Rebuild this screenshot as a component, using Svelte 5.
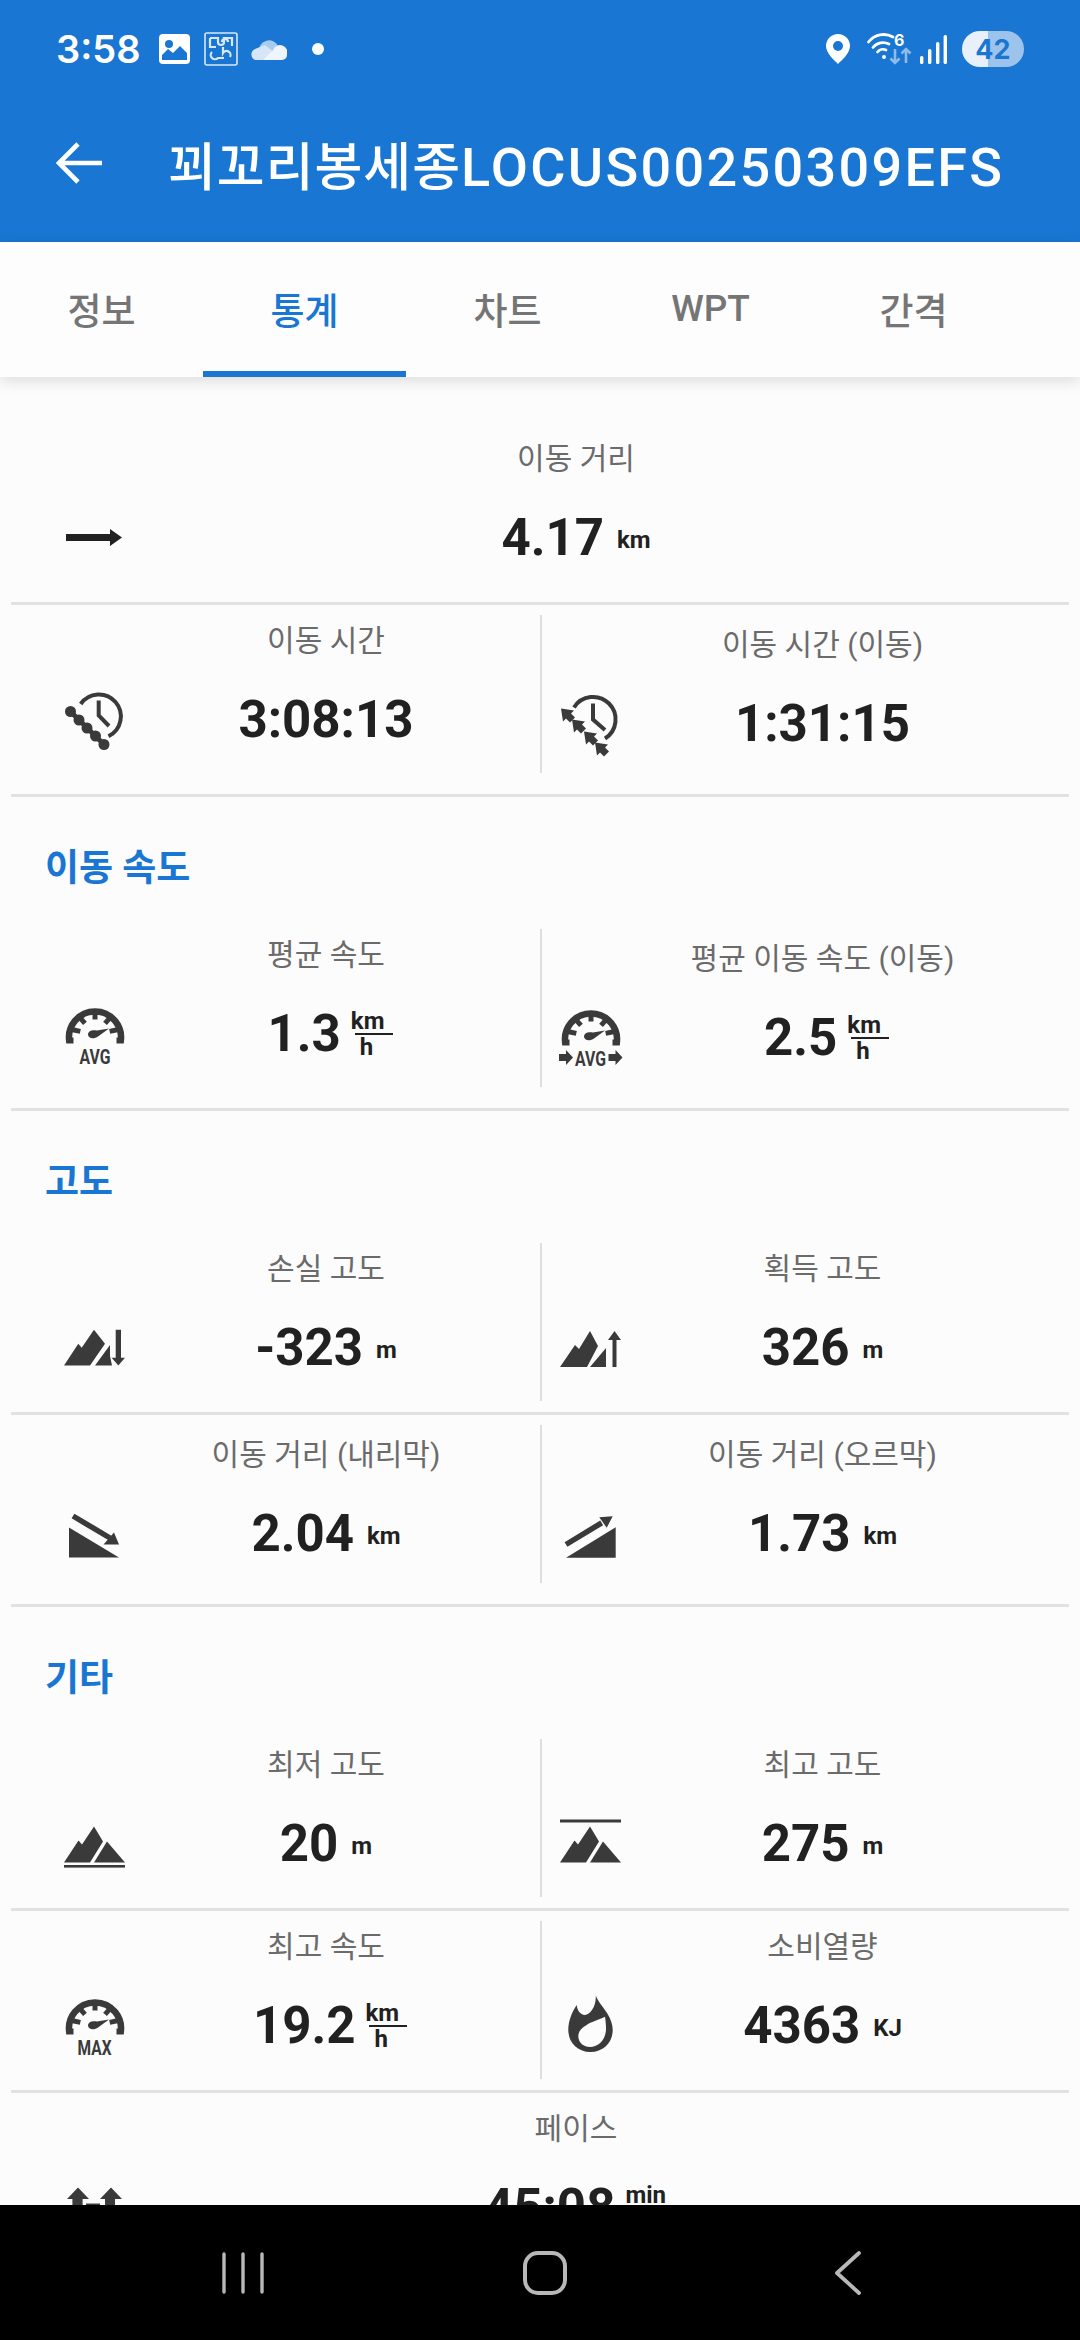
<script>
  const tabs = ["정보", "통계", "차트", "WPT", "간격"];
  const sections = [
    {
      title: "",
      rows: [
        [{ label: "이동 거리", value: "4.17", unit: "km", icon: "arrow", full: true }],
        [
          { label: "이동 시간", value: "3:08:13", icon: "clockChain" },
          { label: "이동 시간 (이동)", value: "1:31:15", icon: "clockArrows", low: true }
        ]
      ]
    },
    {
      title: "이동 속도",
      rows: [
        [
          { label: "평균 속도", value: "1.3", top: "km", bottom: "h", icon: "avg" },
          { label: "평균 이동 속도 (이동)", value: "2.5", top: "km", bottom: "h", icon: "avgMoving", low: true }
        ]
      ]
    },
    {
      title: "고도",
      rows: [
        [
          { label: "손실 고도", value: "-323", unit: "m", icon: "descent" },
          { label: "획득 고도", value: "326", unit: "m", icon: "ascent" }
        ],
        [
          { label: "이동 거리 (내리막)", value: "2.04", unit: "km", icon: "downhill", low: true },
          { label: "이동 거리 (오르막)", value: "1.73", unit: "km", icon: "uphill", low: true }
        ]
      ]
    },
    {
      title: "기타",
      rows: [
        [
          { label: "최저 고도", value: "20", unit: "m", icon: "lowest" },
          { label: "최고 고도", value: "275", unit: "m", icon: "highest" }
        ],
        [
          { label: "최고 속도", value: "19.2", top: "km", bottom: "h", icon: "max" },
          { label: "소비열량", value: "4363", unit: "KJ", icon: "flame" }
        ],
        [{ label: "페이스", value: "45:08", top: "min", bottom: "km", icon: "pace", full: true }]
      ]
    }
  ];
  const gaugeTicks = [-78, -42, 0, 42, 78];
</script>

{#snippet gauge(cy)}
  <path d="M5.5 {cy + 8} A26 26 0 1 1 56.5 {cy + 8}" fill="none" stroke="currentColor" stroke-width="6.5" />
  {#each gaugeTicks as angle}
    <rect x="28.5" y={cy - 24} width="5" height="9" fill="currentColor" transform="rotate({angle} 31 {cy})" />
  {/each}
  <rect x="2.5" y={cy + 3} width="7" height="6" fill="currentColor" />
  <rect x="52.5" y={cy + 3} width="7" height="6" fill="currentColor" />
  <path d="M24 {cy} C24 {cy - 4} 29 {cy - 5} 33 {cy - 4} L45 {cy - 6} L34 {cy + 2} C30 {cy + 5} 24 {cy + 4} 24 {cy} Z" fill="currentColor" />
{/snippet}

{#snippet peaks(top)}
  <path d="M0 {top + 36} L14.5 {top + 14} L18 {top + 18} L30 {top} L39 {top + 15} L26 {top + 36} Z" fill="currentColor" />
  <path d="M30 {top + 36} L43 {top + 15} L61 {top + 36} Z" fill="currentColor" />
{/snippet}

{#snippet icon(name)}
  <svg class="icon" class:dark={name === "arrow"} viewBox="0 0 61 61" aria-hidden="true">
    {#if name === "arrow"}
      <path d="M2 27h44v-5l12 8.5-12 8.5v-5H2z" fill="currentColor" />
    {:else if name === "clockChain"}
      <g fill="none" stroke="currentColor">
        <path d="M16.7 15A22 22 0 1 1 44.5 47.2" stroke-width="4" />
        <path d="M34.7 11.5V26.5L45 37" stroke-width="4" />
        <path d="M6.5 22.5 40 55.5" stroke-width="5" />
      </g>
      {#each [[6.5, 22.5], [15, 31], [23, 39], [31.5, 47], [40, 55.5]] as [cx, cy]}
        <circle {cx} {cy} r="5.5" fill="currentColor" />
      {/each}
    {:else if name === "clockArrows"}
      <g fill="none" stroke="currentColor" stroke-width="4">
        <path d="M14 14.5A22.5 22.5 0 1 1 45 45.5" />
        <path d="M33 10.5V26.5L45 37" />
      </g>
      {#each [[8, 22.5], [19, 33.5], [31, 45.5], [42, 56.5]] as [x, y]}
        <path d="M-7-7 6-5 3-2 7 2 2 7-2 3-5 6Z" fill="currentColor" transform="translate({x} {y})" />
      {/each}
    {:else if name === "avg"}
      {@render gauge(31.5)}
      <text class="tag" x="31" y="60.5" text-anchor="middle" textLength="31" lengthAdjust="spacingAndGlyphs">AVG</text>
    {:else if name === "avgMoving"}
      {@render gauge(29.5)}
      <text class="tag" x="30.5" y="58.5" text-anchor="middle" textLength="31" lengthAdjust="spacingAndGlyphs">AVG</text>
      <path d="M-1 47h7v-4l7 7.5-7 7.5v-4h-7z" fill="currentColor" />
      <path d="M48.5 47h7v-4l7 7.5-7 7.5v-4h-7z" fill="currentColor" />
    {:else if name === "max"}
      {@render gauge(30.5)}
      <text class="tag" x="30.5" y="59.5" text-anchor="middle" textLength="34" lengthAdjust="spacingAndGlyphs">MAX</text>
    {:else if name === "descent"}
      <path d="M0 48.5 14.3 26.8 17.7 30.8 30 12.8 41 26.8 26 48.5Z" fill="currentColor" />
      <path d="M31 48.5 46 28V39L48 48.5Z" fill="currentColor" />
      <path d="M51.7 12.8H57V40.8H61L54.3 48.5 47.7 40.8H51.7Z" fill="currentColor" />
    {:else if name === "ascent"}
      <path d="M0 50 15 28 19 32 30 14 38 29 27 50Z" fill="currentColor" />
      <path d="M30 50 46 31V50Z" fill="currentColor" />
      <path d="M52.5 50V23H48L54.5 14 61 23H56.5V50Z" fill="currentColor" />
    {:else if name === "downhill"}
      <path d="M5 24.5V54.5H55Z" fill="currentColor" />
      <path d="M9 13 46 35" stroke="currentColor" stroke-width="5.5" />
      <path d="M55 41.5 50 29.5 39.5 41.5Z" fill="currentColor" />
    {:else if name === "uphill"}
      <path d="M6 54.8 55.7 24.2V54.8Z" fill="currentColor" />
      <path d="M6 41.5 41.7 19.8" stroke="currentColor" stroke-width="5.5" />
      <path d="M52.7 13.2 39.3 14.2 46.7 24.8Z" fill="currentColor" />
    {:else if name === "lowest"}
      {@render peaks(13.5)}
      <rect x="0" y="52" width="61" height="2.6" fill="currentColor" />
    {:else if name === "highest"}
      {@render peaks(13.5)}
      <rect x="0" y="6.5" width="61" height="3" fill="currentColor" />
    {:else if name === "flame"}
      <path
        fill-rule="evenodd"
        fill="currentColor"
        transform="translate(0 -2)"
        d="M35.7 0C35 5 42 12 47 20C51 26 52.7 32 52.7 37C52.7 50 43 59 30.5 59C18 59 8.3 50 8.3 37C8.3 28 12 19 16.7 12C17 17 20 21.5 25 22C30 21.5 37 14 35.7 0ZM45 23.8C38 27 31 29 26.7 32C21 35 18.3 39 18.3 43C18.3 50 24 54 30 54C39 54 46 46 46 36C46 31 45.5 27 45 23.8Z"
      />
    {:else if name === "pace"}
      <path d="M3 22 14 10.5 25 22H18.6V40H8.4V22Z" fill="currentColor" />
      <path d="M36 22 47 10.5 58 22H51V40H41V22Z" fill="currentColor" />
      <rect x="22" y="26.5" width="14" height="5" fill="currentColor" />
    {/if}
  </svg>
{/snippet}

<div class="phone">
  <header class="top">
    <div class="status">
      <div class="status-left">
        <span class="clock">3:58</span>
        <svg class="st-photo" viewBox="0 0 31 30" aria-hidden="true">
          <rect width="31" height="30" rx="4" fill="#fff" />
          <circle cx="10" cy="10" r="4" fill="#1976d2" />
          <path d="M3 26V21L9 15 14 19 21 12 28 19V26Z" fill="#1976d2" />
        </svg>
        <svg class="st-puzzle" viewBox="0 0 34 34" aria-hidden="true">
          <rect x="1" y="1" width="32" height="32" rx="2" fill="none" stroke="#d8e8f8" stroke-width="1.6" />
          <g fill="none" stroke="#d8e8f8" stroke-width="2.2">
            <path d="M6 6H14V10A3 3 0 1 0 20 10V6H28V14" />
            <path d="M6 6V15H12M24 10A3 3 0 1 0 18 10" />
            <path d="M8 20A4 4 0 1 0 14 26H20M19 15V21A4 4 0 1 1 26 25" />
          </g>
        </svg>
        <svg class="st-cloud" viewBox="0 0 36 24" aria-hidden="true">
          <path d="M8 14A10 10 0 0 1 27 9L20 15Z" fill="#a9cbee" />
          <path d="M4 23A6 6 0 0 1 4 12L14 8 24 16 17 23Z" fill="#d6e6f7" />
          <path d="M12 23 22 13A7 7 0 0 1 36 18 5 5 0 0 1 31 23Z" fill="#eef5fc" />
        </svg>
        <span class="st-dot"></span>
      </div>
      <div class="status-right">
        <svg class="st-pin" viewBox="0 0 24 30" aria-hidden="true">
          <path fill-rule="evenodd" fill="#fff" d="M12 0A12 12 0 0 1 24 12C24 19 16 26 12 30 8 26 0 19 0 12A12 12 0 0 1 12 0ZM12 7A5 5 0 1 0 12 17 5 5 0 0 0 12 7Z" />
        </svg>
        <svg class="st-wifi" viewBox="0 0 44 32" aria-hidden="true">
          <g fill="none" stroke="#fff" stroke-width="2.8" stroke-linecap="round">
            <path d="M1.5 9A19 19 0 0 1 26 4" />
            <path d="M6 14.5A13 13 0 0 1 22 11" />
            <path d="M10.5 19A7 7 0 0 1 19 17" />
          </g>
          <circle cx="17" cy="24" r="2" fill="#fff" />
          <g fill="none" stroke="#8fbbe9" stroke-width="2.6">
            <path d="M28 16V30M23.5 25.5 28 30 32.5 25.5" />
            <path d="M39 30V16M34.5 20.5 39 16 43.5 20.5" />
          </g>
          <text x="27" y="13" class="st-six">6</text>
        </svg>
        <svg class="st-signal" viewBox="0 0 27 29" aria-hidden="true">
          <g fill="#fff">
            <rect x="0" y="21" width="3.4" height="8" rx="1.6" />
            <rect x="8" y="14" width="3.4" height="15" rx="1.6" />
            <rect x="16" y="7" width="3.4" height="22" rx="1.6" />
            <rect x="23.6" y="0" width="3.4" height="29" rx="1.6" />
          </g>
        </svg>
        <span class="battery"><span class="battery-text">42</span></span>
      </div>
    </div>
    <div class="toolbar">
      <svg class="back" viewBox="0 0 46 42" aria-hidden="true">
        <path d="M46 21H3M22 2 3 21 22 40" fill="none" stroke="#fff" stroke-width="4.6" />
      </svg>
      <h1>꾀꼬리봉세종<span class="latin">LOCUS00250309EFS</span></h1>
    </div>
  </header>

  <nav class="tabs">
    {#each tabs as tab, i}
      <span class="tab" class:active={i === 1}>{tab}</span>
    {/each}
  </nav>

  <main class="stats">
    {#each sections as section}
      {#if section.title}
        <h2>{section.title}</h2>
      {/if}
      {#each section.rows as row, r}
        <div class="row">
          {#each row as cell, c}
            {#if c === 1}<span class="vline"></span>{/if}
            <div class="cell" class:full={cell.full} class:second={c === 1} class:low={cell.low}>
              <div class="label">{cell.label}</div>
              <div class="glyph">{@render icon(cell.icon)}</div>
              <div class="reading">
                <span class="value">{cell.value}</span>
                {#if cell.unit}
                  <span class="unit">{cell.unit}</span>
                {:else if cell.top}
                  <span class="frac">
                    <span>{cell.top}</span>
                    <i></i>
                    <span class="under">{cell.bottom}</span>
                  </span>
                {/if}
              </div>
            </div>
          {/each}
        </div>
        <div class="rule" class:last={r === section.rows.length - 1}></div>
      {/each}
    {/each}
  </main>

  <footer class="navbar">
    <svg viewBox="0 0 44 44" aria-hidden="true">
      <path d="M3 3V41M22 3V41M41 3V41" fill="none" stroke="#b8b8b8" stroke-width="3.4" stroke-linecap="round" />
    </svg>
    <svg viewBox="0 0 44 44" aria-hidden="true">
      <rect x="2" y="2" width="40" height="40" rx="13" fill="none" stroke="#b8b8b8" stroke-width="4" />
    </svg>
    <svg class="nav-back" viewBox="0 0 30 44" aria-hidden="true">
      <path d="M26 2 4 22 26 42" fill="none" stroke="#b8b8b8" stroke-width="3.8" stroke-linecap="round" stroke-linejoin="round" />
    </svg>
  </footer>
</div>

<style>
  :global(body) {
    margin: 0;
    background: #fcfcfc;
  }
  .phone {
    width: 1080px;
    height: 2340px;
    display: flex;
    flex-direction: column;
    overflow: hidden;
    font-family: Roboto, "Noto Sans CJK KR", sans-serif;
    background: #fcfcfc;
  }

  .top {
    background: #1976d2;
    color: #fff;
    height: 242px;
    flex: none;
  }
  .status {
    height: 98px;
    display: flex;
    justify-content: space-between;
    align-items: center;
    padding: 0 56px;
  }
  .status-left,
  .status-right {
    display: flex;
    align-items: center;
  }
  .clock {
    font-family: Inter, sans-serif;
    font-weight: 600;
    font-size: 38px;
    width: 103px;
  }
  .st-photo {
    width: 31px;
    height: 30px;
  }
  .st-puzzle {
    width: 34px;
    height: 34px;
    margin-left: 14px;
  }
  .st-cloud {
    width: 36px;
    height: 24px;
    margin-left: 13px;
  }
  .st-dot {
    width: 12px;
    height: 12px;
    border-radius: 50%;
    background: #fff;
    margin-left: 25px;
  }
  .st-pin {
    width: 24px;
    height: 30px;
  }
  .st-wifi {
    width: 44px;
    height: 32px;
    margin-left: 17px;
    overflow: visible;
  }
  .st-six {
    font: 700 16px Inter, sans-serif;
    fill: #fff;
  }
  .st-signal {
    width: 27px;
    height: 29px;
    margin-left: 9px;
  }
  .battery {
    width: 62px;
    height: 36px;
    border-radius: 18px;
    margin: 0 0 0 15px;
    display: flex;
    align-items: center;
    justify-content: center;
    background: linear-gradient(90deg, #e8f1fb 0 26px, #9cc3ec 26px);
  }
  .battery-text {
    font: 700 27px Inter, sans-serif;
    color: #1976d2;
  }

  .toolbar {
    height: 130px;
    display: flex;
    align-items: center;
    padding-left: 56px;
  }
  .back {
    width: 46px;
    height: 42px;
    flex: none;
  }
  h1 {
    margin: 0 0 0 66px;
    font-size: 52px;
    font-weight: 500;
    letter-spacing: 1px;
    white-space: nowrap;
  }
  .latin {
    font-size: 54px;
    letter-spacing: 2.3px;
  }

  .tabs {
    height: 135px;
    flex: none;
    display: flex;
    background: #fdfdfd;
    box-shadow: 0 4px 14px rgba(0, 0, 0, 0.13);
    position: relative;
  }
  .tab {
    width: 203px;
    box-sizing: border-box;
    padding-top: 4px;
    border-bottom: 6px solid transparent;
    display: flex;
    align-items: center;
    justify-content: center;
    font-size: 37px;
    font-weight: 500;
    color: #757575;
  }
  .tab.active {
    color: #1976d2;
    border-bottom-color: #1976d2;
  }

  .stats {
    flex: 1;
    min-height: 0;
    overflow: hidden;
    padding-top: 56px;
  }
  h2 {
    margin: 0;
    height: 132px;
    box-sizing: border-box;
    padding: 47px 0 0 45px;
    font-size: 37px;
    line-height: 50px;
    font-weight: 700;
    color: #1976d2;
  }
  .row {
    display: flex;
    height: 158px;
    margin: 0 12px;
  }
  .vline {
    width: 2px;
    background: #dedede;
    flex: none;
  }
  .rule {
    height: 3px;
    margin: 11px 11px 10px;
    background: #e2e2e2;
  }
  .rule.last {
    margin: 21px 11px 0;
  }

  .cell {
    flex: none;
    width: 528px;
    box-sizing: border-box;
    padding: 0 13px 0 52px;
    display: grid;
    grid-template-columns: 61px 1fr;
    grid-template-rows: 50px 108px;
    align-items: center;
  }
  .cell.second {
    width: 526px;
    padding: 0 44px 0 18px;
  }
  .cell.full {
    width: 1056px;
    padding: 0 41px 0 52px;
  }
  .cell.low {
    padding-top: 4px;
  }
  .label {
    grid-column: 2;
    grid-row: 1;
    text-align: center;
    font-size: 30px;
    padding-bottom: 5px;
    color: #6b6b6b;
    white-space: nowrap;
  }
  .glyph {
    grid-column: 1;
    grid-row: 2;
    display: flex;
  }
  .icon {
    width: 61px;
    height: 61px;
    overflow: visible;
    color: #3a3a3a;
  }
  .icon.dark {
    color: #212121;
  }
  .tag {
    font: 700 20px Roboto, sans-serif;
    fill: currentColor;
  }
  .reading {
    grid-column: 2;
    grid-row: 2;
    display: flex;
    align-items: center;
    justify-content: center;
    gap: 13px;
    padding-top: 2px;
    color: #212121;
  }
  .value {
    font-size: 51px;
    font-weight: 700;
    line-height: 60px;
  }
  .unit {
    font-size: 24px;
    font-weight: 700;
    margin-top: 3px;
  }
  .frac {
    display: flex;
    flex-direction: column;
    align-items: flex-start;
    margin-left: -3px;
    font-size: 24px;
    font-weight: 700;
    line-height: 24px;
  }
  .frac i {
    display: block;
    width: 38px;
    height: 2px;
    margin: 0 -9px 0 4px;
    background: #212121;
  }
  .under {
    margin-left: 9px;
  }

  .navbar {
    height: 135px;
    flex: none;
    background: #000;
    position: relative;
    display: grid;
    grid-template-columns: repeat(3, 302px);
    justify-content: start;
    padding-left: 92px;
    align-items: center;
    justify-items: center;
  }
  .navbar svg {
    height: 44px;
    width: 44px;
  }
  .navbar .nav-back {
    margin-left: 2px;
  }
</style>
